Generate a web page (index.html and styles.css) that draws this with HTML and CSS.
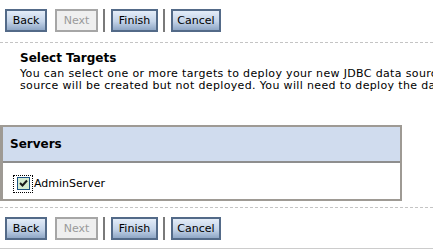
FILE: index.html
```html
<!DOCTYPE html>
<html>
<head>
<meta charset="utf-8">
<link rel="stylesheet" href="styles.css">
</head>
<body>
<div class="page">
  <div class="bar">
    <button class="btn w-back">Back</button>
    <button class="btn disabled w-next">Next</button>
    <span class="sep"></span>
    <button class="btn w-finish">Finish</button>
    <span class="sep"></span>
    <button class="btn w-cancel">Cancel</button>
  </div>
  <div class="dashed"></div>
  <div class="content">
    <h2 class="title">Select Targets</h2>
    <p class="desc">You can select one or more targets to deploy your new JDBC data source<br>source will be created but not deployed. You will need to deploy the data</p>
  </div>
  <div class="table">
    <div class="thead">Servers</div>
    <div class="trow">
      <span class="focus"><span class="check"><svg width="9" height="9" viewBox="0 0 9 9"><path d="M1 4 L3.5 6.5 L8 1.5" fill="none" stroke="#1a1a1a" stroke-width="2"/></svg></span></span>
      <span class="label">AdminServer</span>
    </div>
  </div>
  <div class="dashed d2"></div>
  <div class="bar">
    <button class="btn w-back">Back</button>
    <button class="btn disabled w-next">Next</button>
    <span class="sep"></span>
    <button class="btn w-finish">Finish</button>
    <span class="sep"></span>
    <button class="btn w-cancel">Cancel</button>
  </div>
  <div class="solid"></div>
</div>
</body>
</html>
```
FILE: styles.css
```css
html, body {
  margin: 0;
  padding: 0;
  background: #fff;
  overflow: hidden;
}
.page {
  width: 433px;
  height: 252px;
  overflow: hidden;
  font-family: "DejaVu Sans", Verdana, sans-serif;
  font-size: 11px;
  color: #000;
}
.bar {
  display: flex;
  align-items: center;
  padding: 9px 0 0 5px;
  height: 23px;
}
.btn {
  box-sizing: border-box;
  height: 23px;
  padding: 0;
  border: 2px solid #536a88;
  background: linear-gradient(#e3ecf8, #c3d3e8 55%, #8fa7c6);
  font-family: "DejaVu Sans", Verdana, sans-serif;
  font-size: 11px;
  color: #000;
  margin: 0;
}
.btn.disabled {
  border-color: #a6a6a6;
  background: #efefef;
  color: #9a9a9a;
}
.w-back { width: 42px; }
.w-next { width: 43px; margin-left: 8px; }
.w-finish { width: 47px; }
.w-cancel { width: 50px; }
.sep {
  width: 2px;
  height: 23px;
  background: #7a7a7a;
  margin: 0 6px 0 5px;
}
.dashed {
  margin-top: 10px;
  height: 0;
  border-top: 1px dashed #c4c4c4;
}
.content {
  padding-left: 20px;
  white-space: nowrap;
}
.title {
  margin: 8px 0 0 0;
  font-size: 12px;
  font-weight: bold;
  line-height: 14px;
}
.desc {
  margin: 3px 0 0 0;
  font-size: 11px;
  letter-spacing: 0.35px;
  line-height: 12px;
}
.table {
  margin-top: 33px;
  width: 402px;
  box-sizing: border-box;
  border: 2px solid #9e9a94;
  border-left-width: 3px;
}
.thead {
  height: 34px;
  background: #d0dcee;
  border-bottom: 2px solid #8e8e8e;
  display: flex;
  align-items: center;
  padding-left: 7px;
  font-weight: bold;
  font-size: 12px;
}
.trow {
  box-sizing: border-box;
  height: 36px;
  display: flex;
  align-items: center;
  padding: 5px 0 0 10px;
}
.focus {
  box-sizing: border-box;
  width: 20px;
  height: 18px;
  border: 1px dotted #000;
  display: flex;
  align-items: center;
  justify-content: center;
}
.check {
  box-sizing: border-box;
  width: 13px;
  height: 13px;
  border: 1px solid #1c5180;
  background: #d6ecd2;
  display: flex;
  align-items: center;
  justify-content: center;
}
.label {
  margin-left: 1px;
}
.d2 {
  margin-top: 6px;
}
.solid {
  margin-top: 8px;
  height: 1px;
  background: #cccccc;
}
```
